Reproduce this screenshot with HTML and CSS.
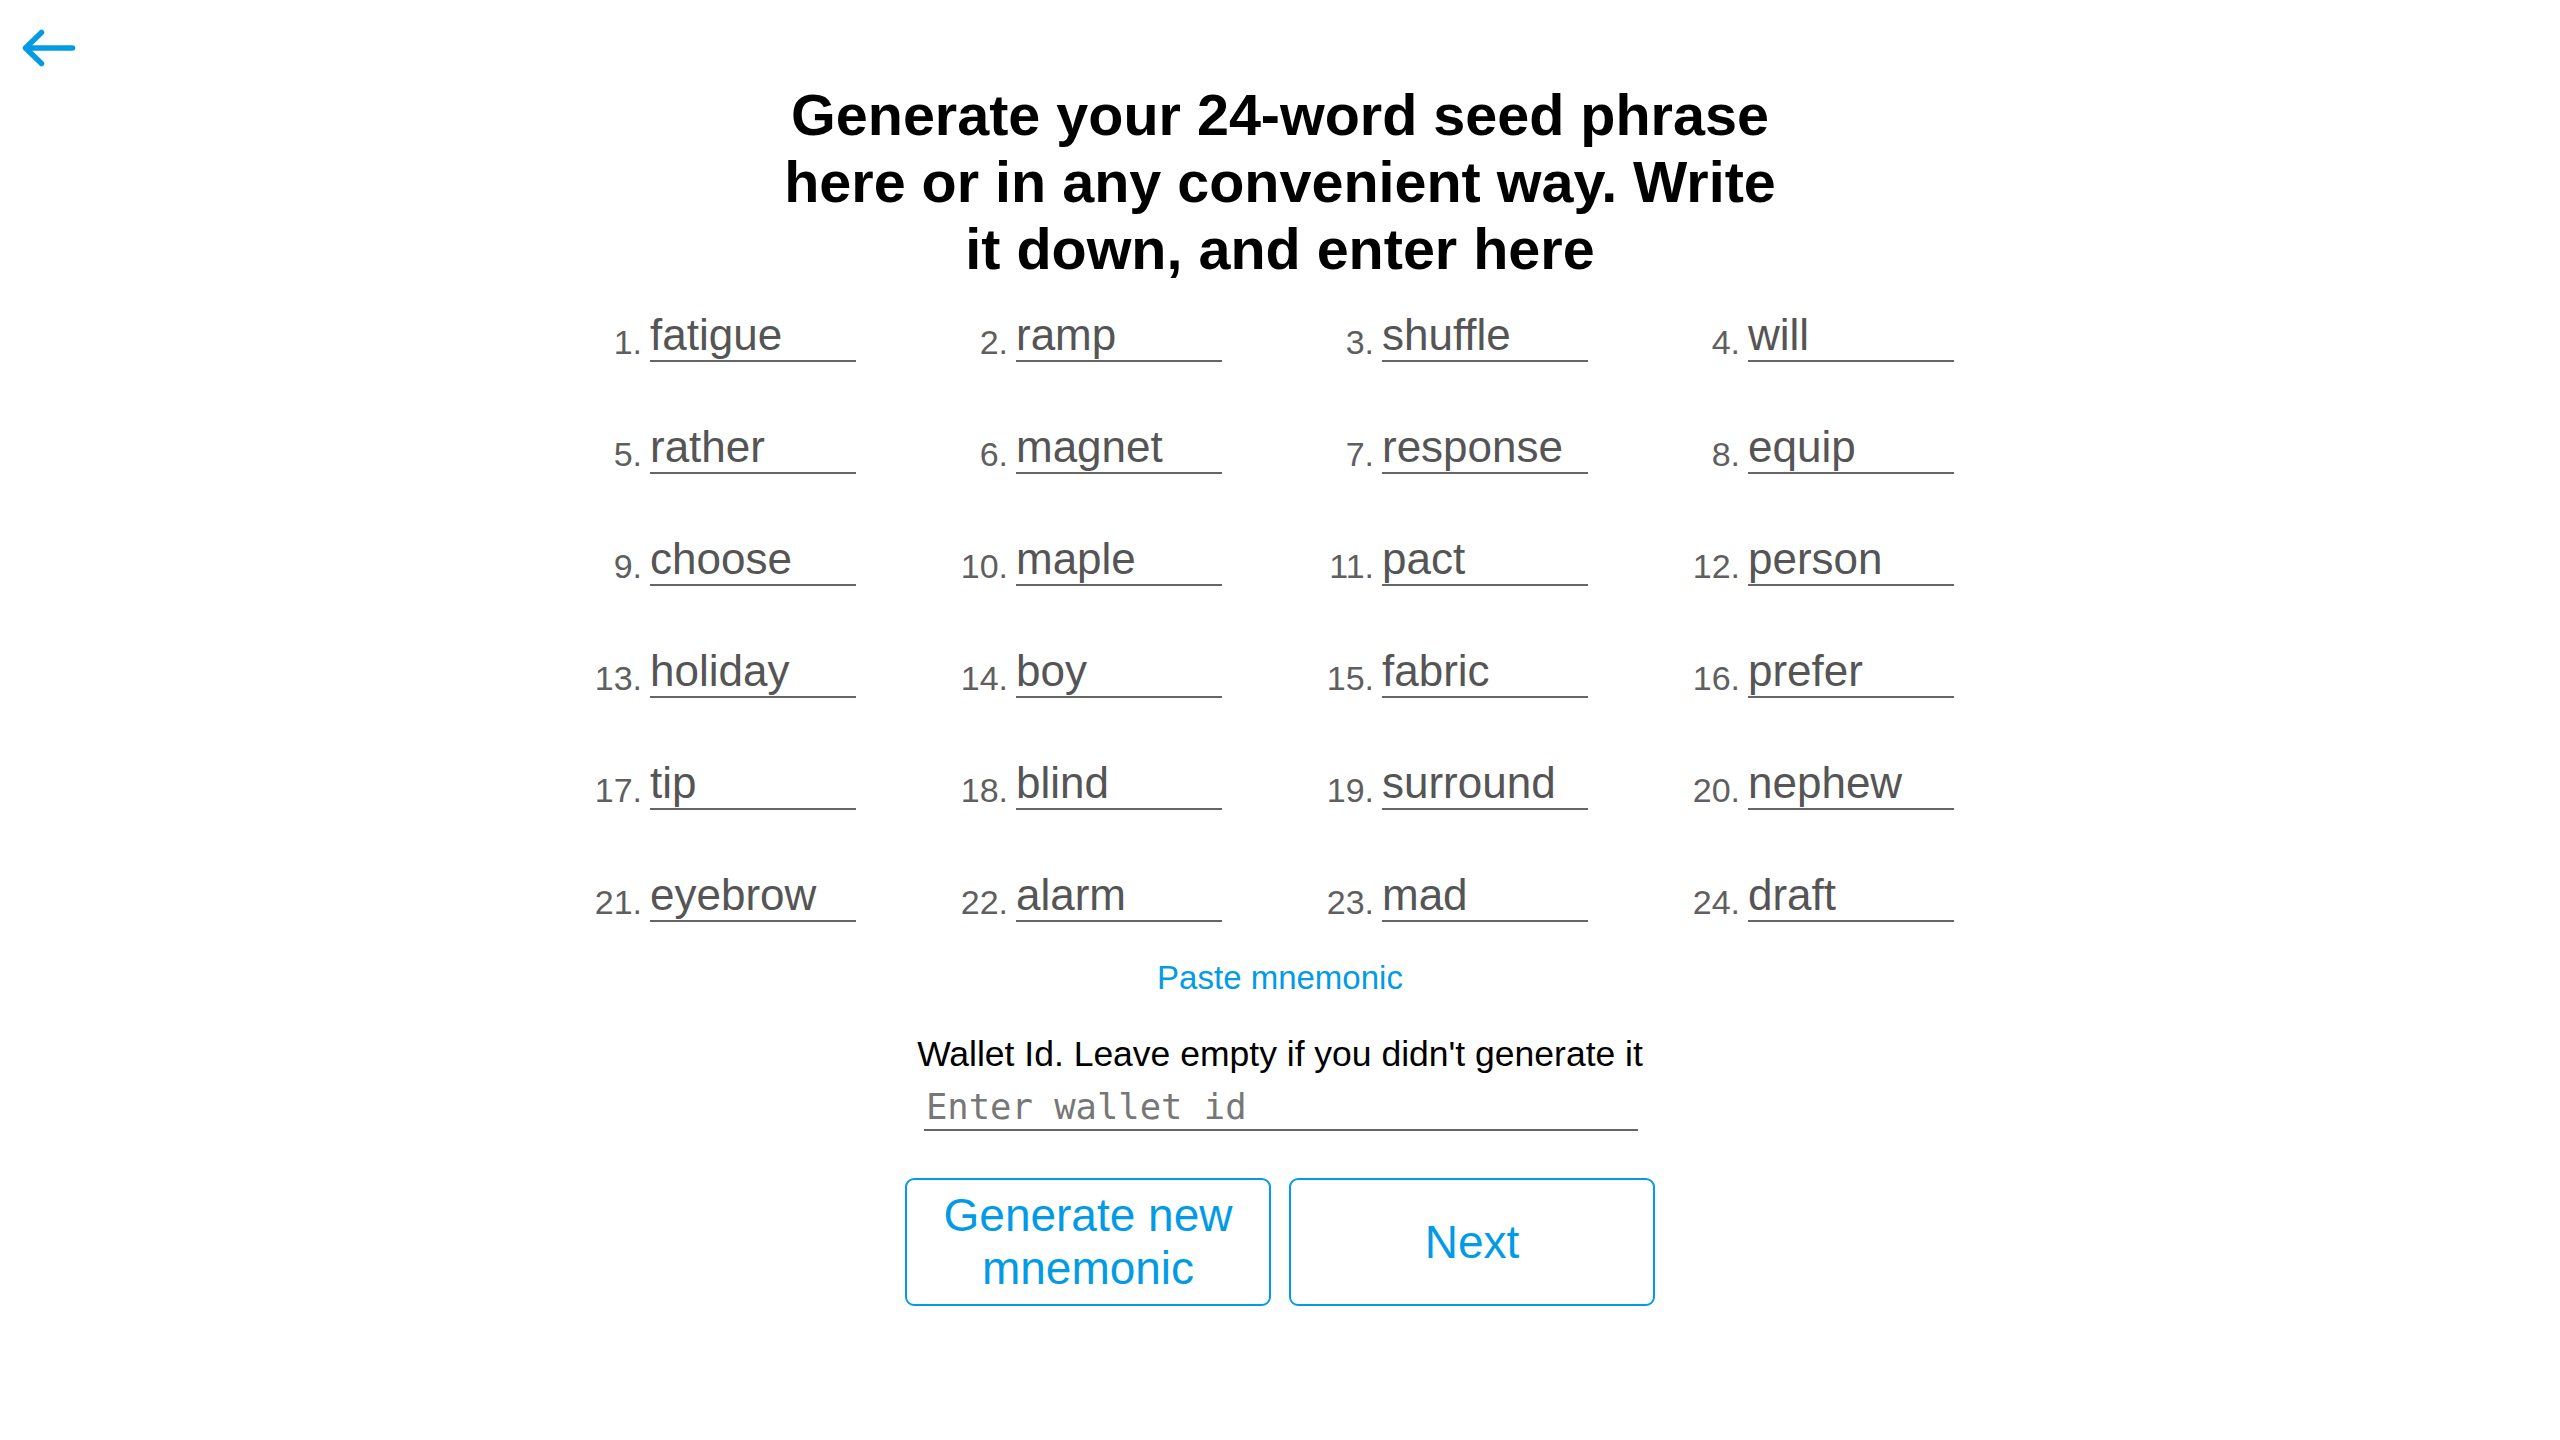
FILE: index.html
```html
<!DOCTYPE html>
<html lang="en">
<head>
<meta charset="utf-8">
<title>Seed phrase</title>
<link rel="stylesheet" href="styles.css">
</head>
<body>
<button class="back" aria-label="Back">
  <svg width="80" height="80" viewBox="0 0 80 80">
    <path d="M25.5 48 H72.5 M41.5 32.5 L25.5 48 L41.5 63.5" fill="none" stroke="#039be5" stroke-width="5.5" stroke-linecap="round" stroke-linejoin="round"/>
  </svg>
</button>
<main class="page">
  <h1 class="title">Generate your 24-word seed phrase here or in any convenient way. Write it down, and enter here</h1>
  <div class="words">
    <div class="cell"><span class="num">1.</span><span class="word">fatigue</span></div>
    <div class="cell"><span class="num">2.</span><span class="word">ramp</span></div>
    <div class="cell"><span class="num">3.</span><span class="word">shuffle</span></div>
    <div class="cell"><span class="num">4.</span><span class="word">will</span></div>
    <div class="cell"><span class="num">5.</span><span class="word">rather</span></div>
    <div class="cell"><span class="num">6.</span><span class="word">magnet</span></div>
    <div class="cell"><span class="num">7.</span><span class="word">response</span></div>
    <div class="cell"><span class="num">8.</span><span class="word">equip</span></div>
    <div class="cell"><span class="num">9.</span><span class="word">choose</span></div>
    <div class="cell"><span class="num">10.</span><span class="word">maple</span></div>
    <div class="cell"><span class="num">11.</span><span class="word">pact</span></div>
    <div class="cell"><span class="num">12.</span><span class="word">person</span></div>
    <div class="cell"><span class="num">13.</span><span class="word">holiday</span></div>
    <div class="cell"><span class="num">14.</span><span class="word">boy</span></div>
    <div class="cell"><span class="num">15.</span><span class="word">fabric</span></div>
    <div class="cell"><span class="num">16.</span><span class="word">prefer</span></div>
    <div class="cell"><span class="num">17.</span><span class="word">tip</span></div>
    <div class="cell"><span class="num">18.</span><span class="word">blind</span></div>
    <div class="cell"><span class="num">19.</span><span class="word">surround</span></div>
    <div class="cell"><span class="num">20.</span><span class="word">nephew</span></div>
    <div class="cell"><span class="num">21.</span><span class="word">eyebrow</span></div>
    <div class="cell"><span class="num">22.</span><span class="word">alarm</span></div>
    <div class="cell"><span class="num">23.</span><span class="word">mad</span></div>
    <div class="cell"><span class="num">24.</span><span class="word">draft</span></div>
  </div>
  <a class="paste" href="#">Paste mnemonic</a>
  <p class="wallet-label">Wallet Id. Leave empty if you didn't generate it</p>
  <div class="wallet-input"><span class="placeholder">Enter wallet id</span></div>
  <div class="actions">
    <button class="btn">Generate new mnemonic</button>
    <button class="btn">Next</button>
  </div>
</main>
</body>
</html>
```
FILE: styles.css
```css
html, body {
  margin: 0;
  padding: 0;
  background: #ffffff;
}
body {
  font-family: "Liberation Sans", Arial, sans-serif;
  color: #000;
}
.back {
  position: absolute;
  left: 0;
  top: 0;
  width: 80px;
  height: 80px;
  padding: 0;
  border: 0;
  background: transparent;
  cursor: pointer;
}
.back svg { display: block; }
.page {
  display: flex;
  flex-direction: column;
  align-items: center;
  padding-top: 82px;
}
.title {
  margin: 0;
  width: 1020px;
  font-size: 57.5px;
  line-height: 67px;
  font-weight: 700;
  text-align: center;
}
.words {
  margin-top: 23px;
  display: grid;
  grid-template-columns: repeat(4, 366px);
  grid-auto-rows: 56px;
  row-gap: 56px;
}
.cell {
  display: flex;
  align-items: flex-end;
}
.num {
  width: 102px;
  box-sizing: border-box;
  padding-right: 8px;
  text-align: right;
  font-size: 34px;
  line-height: 40px;
  color: #5f5f5f;
}
.word {
  display: block;
  width: 206px;
  height: 54px;
  border-bottom: 2px solid #666;
  font-size: 44px;
  line-height: 57px;
  color: #555;
  white-space: nowrap;
}
.paste {
  margin-top: 36px;
  font-size: 33px;
  line-height: 40px;
  color: #039be5;
  text-decoration: none;
}
.wallet-label {
  margin: 36px 0 0;
  font-size: 35.5px;
  line-height: 40px;
  color: #000;
}
.wallet-input {
  margin-top: 10px;
  margin-left: 2px;
  width: 712px;
  height: 40px;
  padding: 3px 0 2px 2px;
  border-bottom: 2px solid #666;
  box-sizing: content-box;
}
.placeholder {
  font-family: "DejaVu Sans Mono", monospace;
  font-size: 35.5px;
  line-height: 40px;
  color: #777;
}
.actions {
  margin-top: 47px;
  display: flex;
  gap: 18px;
}
.btn {
  width: 366px;
  height: 128px;
  box-sizing: border-box;
  border: 2px solid #039be5;
  border-radius: 9px;
  background: #fff;
  color: #039be5;
  font-family: "Liberation Sans", Arial, sans-serif;
  font-size: 46px;
  line-height: 53px;
  padding: 0 8px;
  text-align: center;
  cursor: pointer;
}
```
